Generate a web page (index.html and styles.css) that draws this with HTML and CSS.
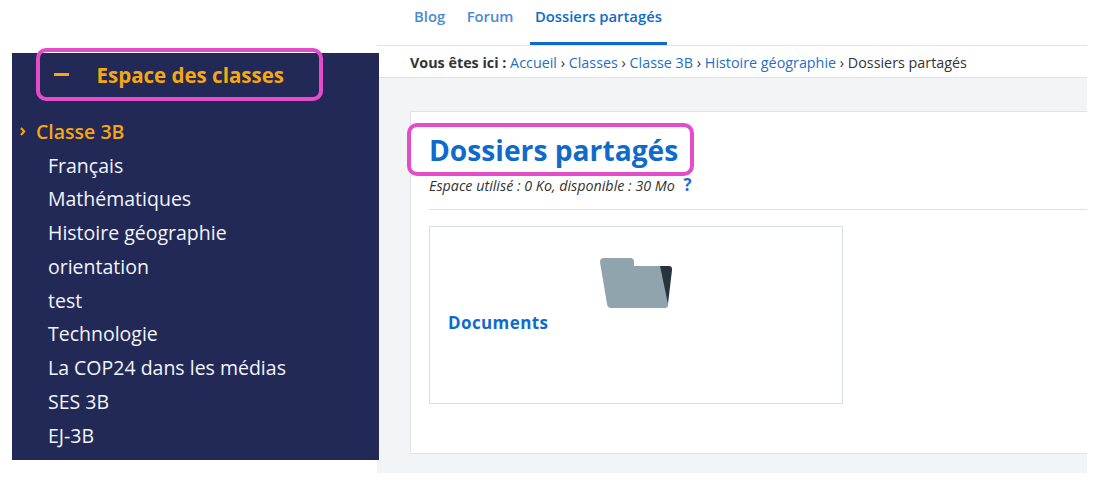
FILE: index.html
```html
<!DOCTYPE html>
<html lang="fr">
<head>
  <meta charset="UTF-8">
  <meta name="viewport" content="width=device-width, initial-scale=1.0">
  <title>Dossiers partagés</title>
  <link rel="stylesheet" href="styles.css">
</head>
<body>

  <div class="page">
    <!-- Menu des classes -->
    <aside class="sidebar">
      <div class="sidebar-title">
        <span class="minus"></span>
        <span>Espace des classes</span>
      </div>
      <div class="current-class">
        <svg class="chevron" width="6" height="9" viewBox="0 0 6 9"><path d="M1 1l3.200 3.500L1 8" fill="none" stroke="#f7a70f" stroke-width="2"/></svg>
        <span>Classe 3B</span>
      </div>
      <ul class="class-list">
        <li>Français</li>
        <li>Mathématiques</li>
        <li>Histoire géographie</li>
        <li>orientation</li>
        <li>test</li>
        <li>Technologie</li>
        <li>La COP24 dans les médias</li>
        <li>SES 3B</li>
        <li>EJ-3B</li>
      </ul>
    </aside>

    <main class="main">
      <nav class="tabs">
        <a href="#">Blog</a>
        <a href="#">Forum</a>
        <a href="#" class="active">Dossiers partagés</a>
      </nav>

      <div class="breadcrumb">
        <strong>Vous êtes ici :</strong>
        <a href="#">Accueil</a> › <a href="#">Classes</a> › <a href="#">Classe 3B</a> › <a href="#">Histoire géographie</a> › Dossiers partagés
      </div>

      <div class="content">
        <section class="card">
          <h1>Dossiers partagés</h1>
          <p class="quota">Espace utilisé : 0 Ko, disponible : 30 Mo <span class="help">?</span></p>
          <hr>
          <div class="folder-box">
            <a href="#" class="folder-name">Documents</a>
            <svg class="folder" width="72" height="50" viewBox="0 0 72 50">
              <path d="M58 8H69Q72.500 8 72 12L68 46H60z" fill="#26343f"/>
              <path d="M0 4Q0 0 4 0H30Q34 0 34 4V8H60L68 46Q68.500 50 65 50H11Q7.500 50 7 46z" fill="#90a4ae"/>
            </svg>
          </div>
        </section>
      </div>
    </main>
  </div>

</body>
</html>
```

FILE: styles.css
```css
body {
  font-family: "Open Sans", sans-serif;
  background-color: #fff;
  margin: 0;
  padding: 0;
}

.page {
  display: flex;
  align-items: flex-start;
  width: 1087px;
  padding-left: 12px;
}

/* Menu de gauche */
.sidebar {
  position: relative;
  z-index: 1;
  flex: 0 0 367px;
  height: 407px;
  margin-top: 53px;
  background-color: #222957;
  box-sizing: border-box;
}

.sidebar-title {
  display: flex;
  align-items: center;
  box-sizing: border-box;
  width: 287px;
  height: 53px;
  margin: -5px 0 0 24px;
  padding-left: 14px;
  gap: 27.500px;
  border: 4px solid #e44ccb;
  border-radius: 10px;
  color: #f7a70f;
  font-size: 20.500px;
  font-weight: 700;
}

.minus {
  width: 15px;
  height: 3px;
  background-color: #f7a70f;
}

.current-class {
  display: flex;
  align-items: center;
  gap: 10px;
  height: 24px;
  margin: 18px 0 0 8px;
  color: #f7a70f;
  font-size: 19.500px;
  font-weight: 600;
}

.class-list {
  list-style: none;
  margin: 5.600px 0 0;
  padding: 0 0 0 36px;
  color: #f2f4f8;
  font-size: 19.500px;
}

.class-list li {
  height: 33.750px;
  line-height: 33.750px;
}

/* Partie principale */
.main {
  flex: 0 0 710px;
  margin-left: -2px;
}

.tabs {
  display: flex;
  height: 45px;
  box-sizing: content-box;
  padding-left: 32px;
  gap: 11.500px;
  border-bottom: 1px solid #dde3e6;
}

.tabs a {
  height: 35px;
  padding: 6px 5px 0;
  color: #4a8ad4;
  font-size: 14.800px;
  font-weight: 600;
  text-decoration: none;
}

.tabs a.active {
  height: 36px;
  color: #0f6bcb;
  border-bottom: 3px solid #0f6bcb;
}

.breadcrumb {
  height: 32px;
  box-sizing: border-box;
  padding: 7px 0 0 33px;
  border-bottom: 1px solid #dfe3e6;
  color: #333;
  font-size: 14.340px;
}

.breadcrumb a {
  color: #1f6fc4;
  text-decoration: none;
}

.content {
  height: 395px;
  box-sizing: border-box;
  padding: 33px 0 19px 33px;
  background-color: #f3f4f6;
}

.card {
  height: 343px;
  box-sizing: border-box;
  padding-top: 11px;
  padding-left: 18px;
  background-color: #fff;
  border: 1px solid #dde3e8;
  border-right: 0;
}

h1 {
  display: inline-block;
  box-sizing: border-box;
  height: 53px;
  margin: 0 0 0 -22px;
  padding: 0 12px 0 18px;
  border: 4px solid #e44ccb;
  border-radius: 10px;
  color: #0f6bcb;
  font-size: 28.200px;
  font-weight: 700;
  line-height: 46px;
  background-color: #fff;
  white-space: nowrap;
}

.quota {
  height: 19px;
  margin: -1px 0 0;
  line-height: 19px;
  color: #333;
  font-size: 14.300px;
  font-style: italic;
}

.help {
  margin-left: 5px;
  color: #1f6fc4;
  font-size: 17px;
  font-style: normal;
  font-weight: 700;
}

hr {
  height: 1px;
  margin: 15px 0 16px;
  border: 0;
  background-color: #dde1e4;
}

.folder-box {
  display: flex;
  align-items: flex-start;
  box-sizing: border-box;
  width: 414px;
  height: 178px;
  padding: 31px 0 0 18px;
  border: 1px solid #d8e0e5;
}

.folder-name {
  flex: 0 0 152px;
  margin-top: 53px;
  color: #0f6bcb;
  font-size: 17px;
  font-weight: 700;
  letter-spacing: 0.4px;
  text-decoration: none;
}
```
